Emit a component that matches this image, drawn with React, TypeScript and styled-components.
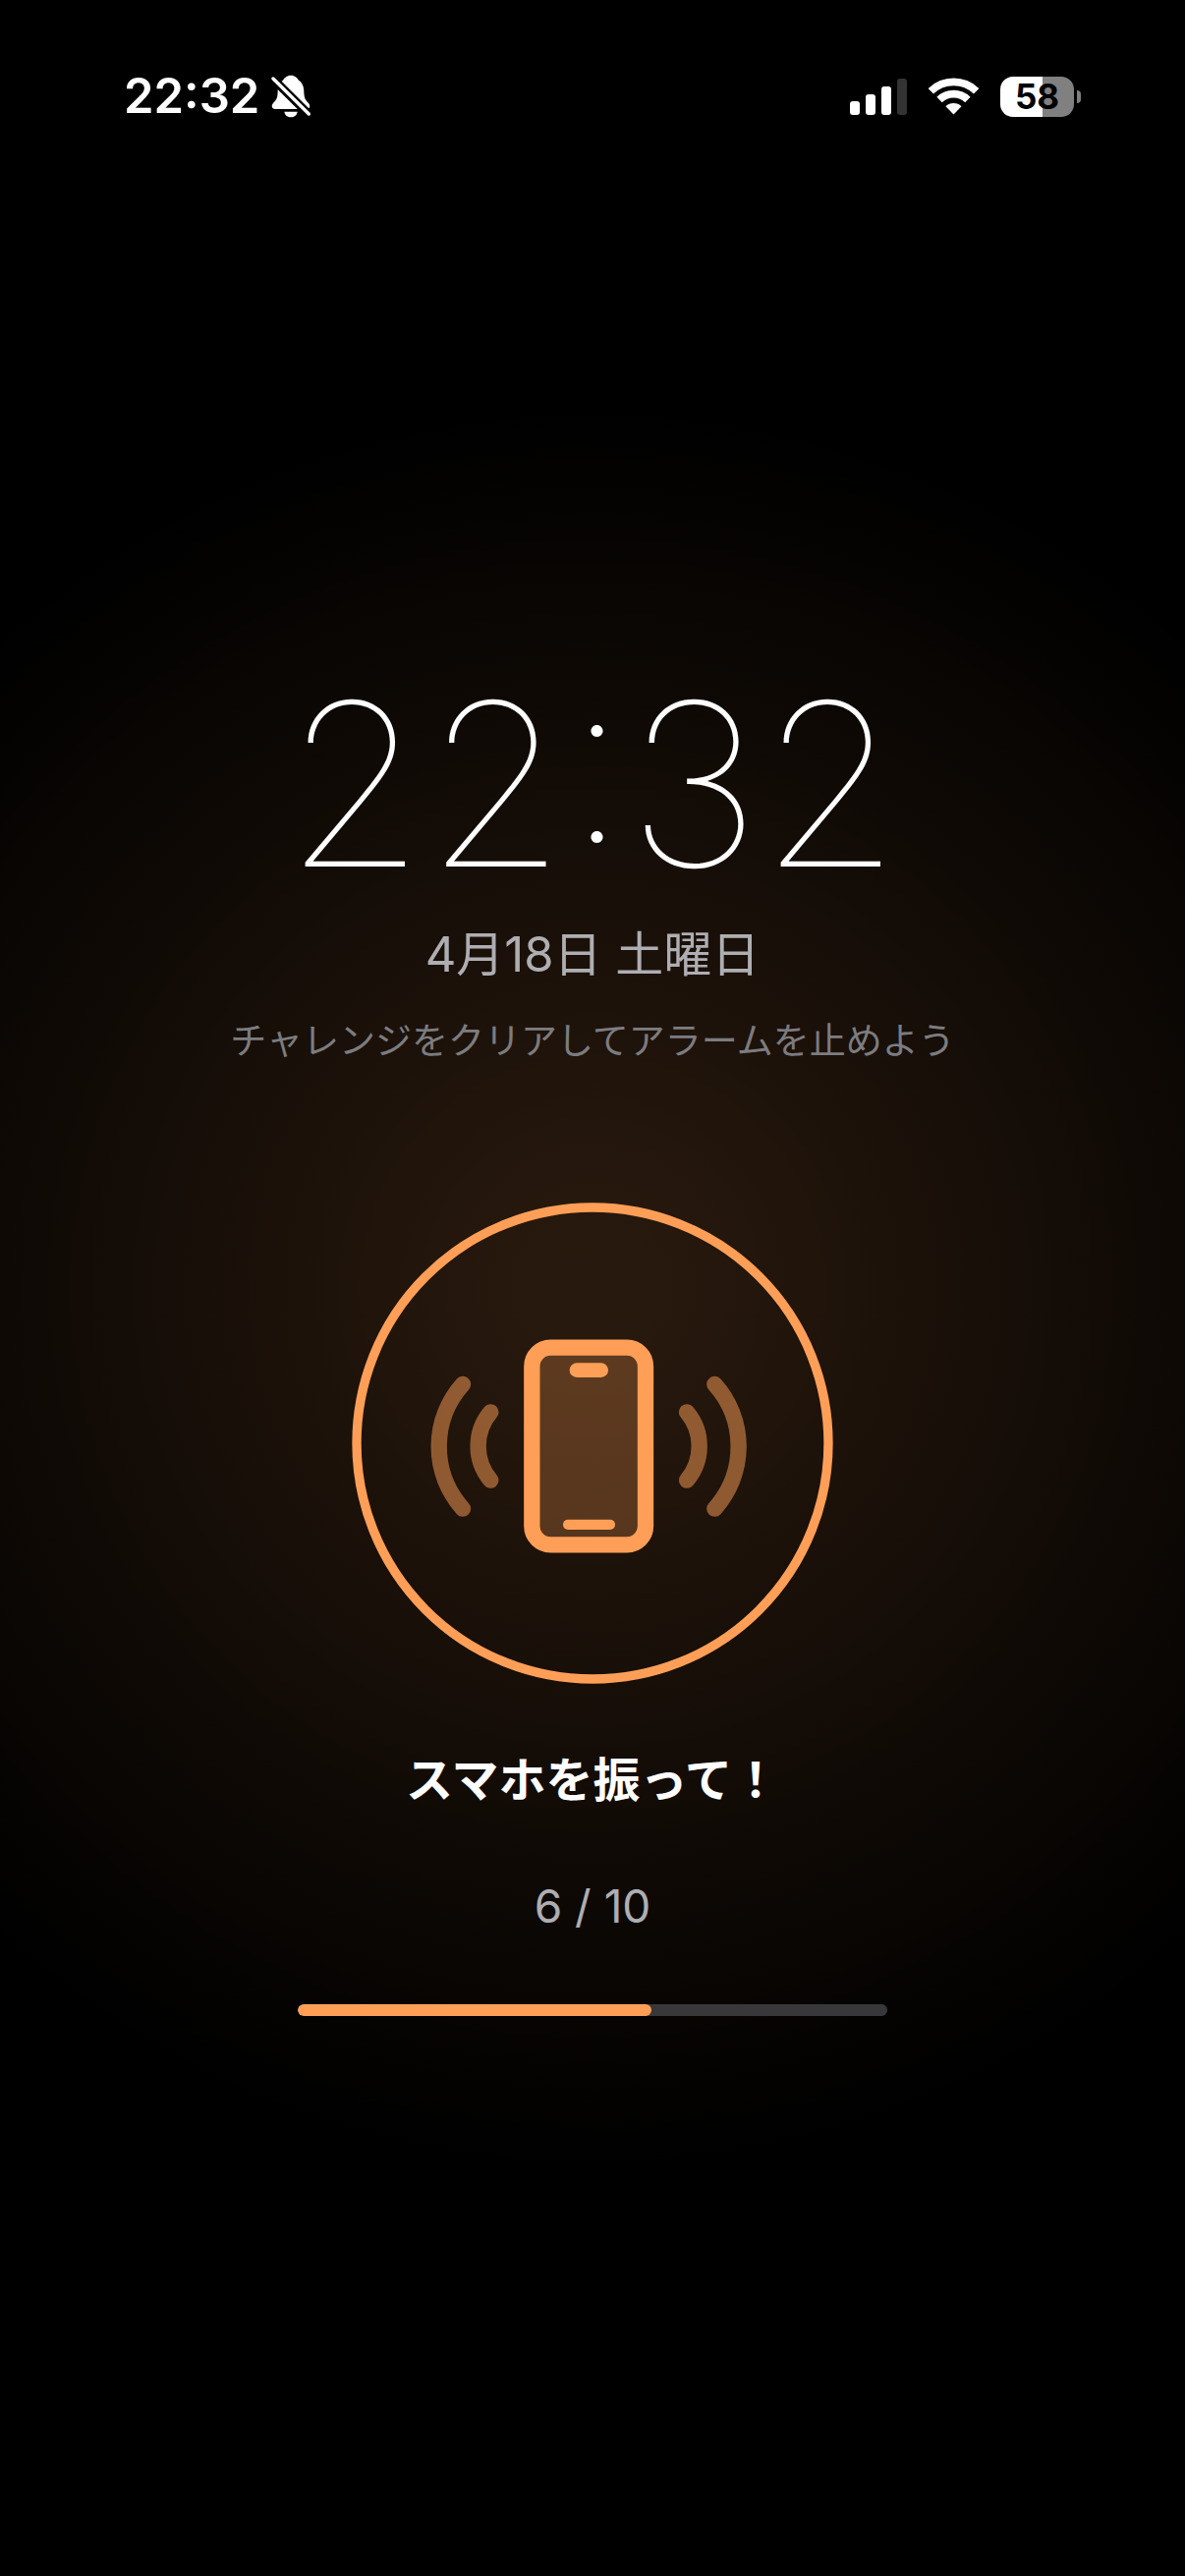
import React from "react";
import styled, { createGlobalStyle } from "styled-components";

const orange = "#ff9f57";
const sans = `Inter, "Noto Sans CJK JP", sans-serif`;

const GlobalStyle = createGlobalStyle`
  *, *::before, *::after { box-sizing: border-box; }
  html { background: #000; }
  body { margin: 0; background: #000; color: #fff; font-family: ${sans}; }
`;

const Screen = styled.div`
  min-height: 100vh;
  display: flex;
  flex-direction: column;
  background: radial-gradient(circle 900px at center, rgba(255, 159, 87, 0.155) 60px, rgba(255, 159, 87, 0)) #000;
`;

const StatusBar = styled.header`
  display: flex;
  align-items: center;
  justify-content: space-between;
  padding: 68px 106px 0 126px;
`;

const StatusGroup = styled.div<{ $gap: number }>`
  display: flex;
  align-items: center;
  gap: ${({ $gap }) => $gap}px;
  height: 60px;
`;

const StatusTime = styled.time`
  font-size: 49px;
  font-weight: 600;
  line-height: 60px;
`;

const SignalBars = styled.div`
  display: flex;
  align-items: flex-end;
  gap: 6px;
`;

const SignalBar = styled.span<{ $height: number; $off?: boolean }>`
  width: 10px;
  height: ${({ $height }) => $height}px;
  border-radius: 3px;
  background: ${({ $off }) => ($off ? "#333" : "#fff")};
`;

const Battery = styled.div`
  display: flex;
  align-items: center;
  gap: 3px;
`;

const BatteryBody = styled.div<{ $level: number }>`
  width: 75px;
  height: 41px;
  border-radius: 13px;
  background: linear-gradient(to right, #fff ${({ $level }) => $level}%, #808080 ${({ $level }) => $level}%);
  color: #000;
  font-size: 35px;
  font-weight: 700;
  line-height: 41px;
  text-align: center;
`;

const BatteryTip = styled.span`
  width: 4px;
  height: 13px;
  border-radius: 0 4px 4px 0;
  background: #808080;
`;

const Main = styled.main`
  flex: 1;
  display: flex;
  flex-direction: column;
  align-items: center;
  padding: 530px 24px 0;
  text-align: center;
`;

const Clock = styled.h1`
  margin: 0;
  font-size: 231px;
  font-weight: 130;
  line-height: 280px;
`;

const DateText = styled.p`
  margin: 2px 0 0;
  color: #aeaeb2;
  font-size: 49px;
  line-height: 64px;
`;

const Hint = styled.p`
  margin: 32px 0 0;
  color: #7c7c80;
  font-size: 37px;
  line-height: 48px;
`;

const Challenge = styled.section`
  display: flex;
  flex-direction: column;
  align-items: center;
  width: 100%;
  margin-top: 140px;
`;

const Prompt = styled.h2`
  margin: 66px 0 0;
  font-size: 48px;
  font-weight: 600;
  line-height: 64px;
`;

const Count = styled.label`
  margin-top: 68px;
  color: #aeaeb2;
  font-size: 46px;
  line-height: 56px;
`;

const Progress = styled.progress`
  appearance: none;
  display: block;
  width: 100%;
  max-width: 600px;
  height: 12px;
  margin-top: 72px;
  border: 0;
  border-radius: 6px;
  overflow: hidden;
  background: #38373a;
  &::-webkit-progress-bar { background: #38373a; border-radius: 6px; }
  &::-webkit-progress-value { background: ${orange}; border-radius: 6px; }
`;

function BellOffIcon() {
  return (
    <svg width="40" height="44" viewBox="0 0 120 132" aria-label="消音" role="img">
      <path
        d="M60 2C72 2 79 9 84 17C96 25 100 38 100 54C101 74 106 79 114 87C121 95 118 105 108 105H12C2 105 -1 95 6 87C14 79 19 74 20 54C20 38 24 25 36 17C41 9 48 2 60 2Z"
        fill="#fff"
      />
      <path d="M40 113H80C78 124 70 130 60 130S42 124 40 113Z" fill="#fff" />
      <path d="M-4 3L124 130" stroke="#000" strokeWidth="26" />
      <path d="M6 12L115 120" stroke="#fff" strokeWidth="10" strokeLinecap="round" />
    </svg>
  );
}

function WifiIcon() {
  return (
    <svg width="51" height="38" viewBox="0 0 152 113" aria-label="Wi-Fi" role="img">
      <g fill="none" stroke="#fff" strokeWidth="23">
        <path d="M7 41A99 99 0 0 1 145 41" />
        <path d="M33 67A62 62 0 0 1 119 67" />
      </g>
      <path d="M52 87A35 35 0 0 1 100 87L76 112Z" fill="#fff" />
    </svg>
  );
}

function ShakeIcon() {
  return (
    <svg width="490" height="490" viewBox="54 42 1470 1470" aria-hidden="true">
      <circle cx="789" cy="777" r="720" fill="none" stroke={orange} strokeWidth="28" />
      <g fill="none" stroke={orange} strokeOpacity="0.5" strokeWidth="49" strokeLinecap="round">
        <path d="M478 682A161 161 0 0 0 478 890" />
        <path d="M393 597A284 284 0 0 0 393 977" />
        <path d="M1077 682A161 161 0 0 1 1077 890" />
        <path d="M1162 597A284 284 0 0 1 1162 977" />
      </g>
      <rect x="604" y="485" width="347" height="602" rx="57" fill={orange} fillOpacity="0.25" />
      <rect x="604" y="485" width="347" height="602" rx="57" fill="none" stroke={orange} strokeWidth="49" />
      <rect x="719" y="532" width="118" height="44" rx="22" fill={orange} />
      <rect x="699" y="1010" width="159" height="31" rx="15" fill={orange} />
    </svg>
  );
}

export default function App() {
  const done = 6;
  const total = 10;
  return (
    <Screen>
      <GlobalStyle />
      <StatusBar>
        <StatusGroup $gap={12}>
          <StatusTime>22:32</StatusTime>
          <BellOffIcon />
        </StatusGroup>
        <StatusGroup $gap={22}>
          <SignalBars>
            <SignalBar $height={14} />
            <SignalBar $height={21} />
            <SignalBar $height={29} />
            <SignalBar $height={37} $off />
          </SignalBars>
          <WifiIcon />
          <Battery>
            <BatteryBody $level={58}>58</BatteryBody>
            <BatteryTip />
          </Battery>
        </StatusGroup>
      </StatusBar>
      <Main>
        <Clock>22:32</Clock>
        <DateText>4月18日 土曜日</DateText>
        <Hint>チャレンジをクリアしてアラームを止めよう</Hint>
        <Challenge>
          <ShakeIcon />
          <Prompt>スマホを振って！</Prompt>
          <Count htmlFor="shake-progress">
            {done} / {total}
          </Count>
          <Progress id="shake-progress" value={done} max={total} />
        </Challenge>
      </Main>
    </Screen>
  );
}
